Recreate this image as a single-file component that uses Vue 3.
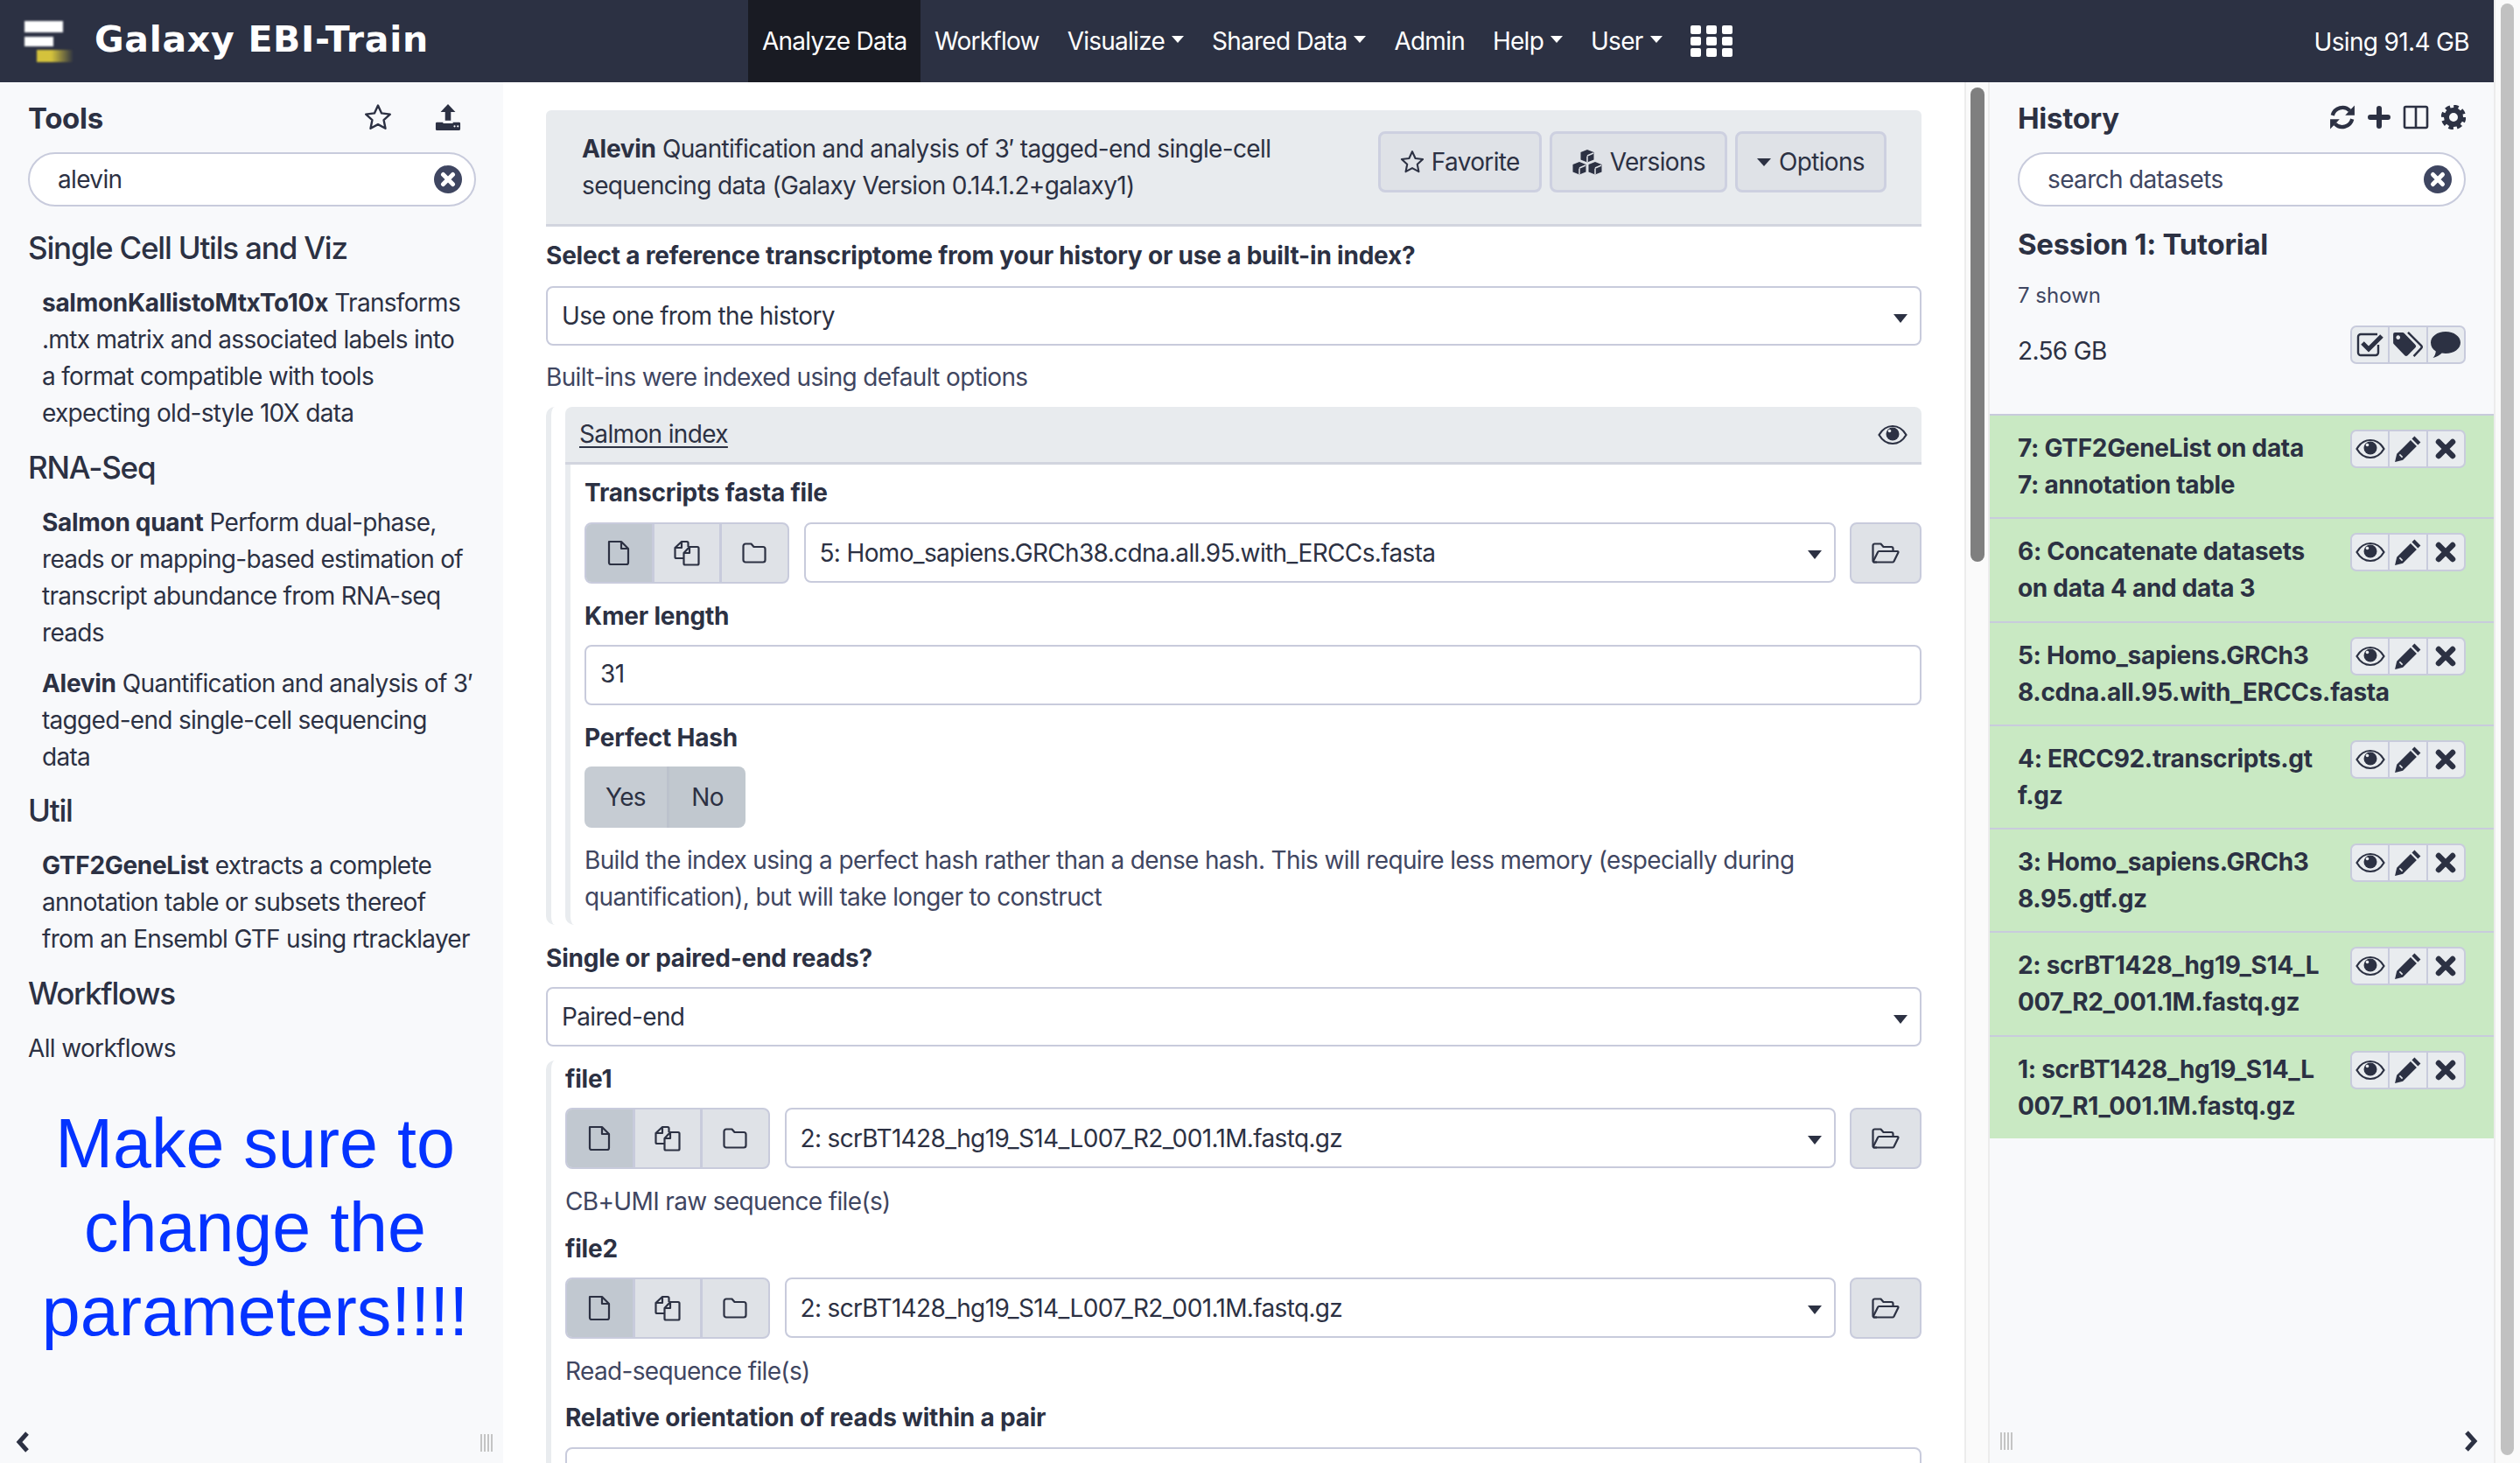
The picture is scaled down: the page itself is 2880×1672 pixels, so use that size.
<template>
  <div class="page">
    <svg class="defs" width="0" height="0">
      <defs>
        <symbol id="i-file" viewBox="0 0 26 30"><path d="M2 2h14l8 8v16a2 2 0 0 1-2 2H4a2 2 0 0 1-2-2zM16 2v8h8" fill="none" stroke="currentColor" stroke-width="2.2" stroke-linejoin="round"/></symbol>
        <symbol id="i-copy" viewBox="0 0 30 30"><path d="M11 21H3a1.500 1.500 0 0 1-1.500-1.500V9L9 2h6a1.500 1.500 0 0 1 1.500 1.500V8M9 2v7H1.500" fill="none" stroke="currentColor" stroke-width="2.200" stroke-linejoin="round"/><path d="M18 8h9a1.500 1.500 0 0 1 1.500 1.500V27a1.500 1.500 0 0 1-1.500 1.500H13a1.500 1.500 0 0 1-1.500-1.500V15zM18 8v7h-6.500" fill="none" stroke="currentColor" stroke-width="2.200" stroke-linejoin="round"/></symbol>
        <symbol id="i-folder" viewBox="0 0 28 24"><path d="M1.500 4A2.500 2.500 0 0 1 4 1.500h6.500l3 3.500H24A2.500 2.500 0 0 1 26.500 7.500V20a2.500 2.500 0 0 1-2.500 2.500H4A2.500 2.500 0 0 1 1.500 20z" fill="none" stroke="currentColor" stroke-width="2.200" stroke-linejoin="round"/></symbol>
        <symbol id="i-folder-open" viewBox="0 0 32 24"><path d="M6 22.500H3.500a2 2 0 0 1-2-2v-17a2 2 0 0 1 2-2h7l3 3.500h9a2 2 0 0 1 2 2V10" fill="none" stroke="currentColor" stroke-width="2.200" stroke-linejoin="round"/><path d="M8.500 10H29.500a1 1 0 0 1 .9 1.500L25.500 21.500a2 2 0 0 1-1.800 1H3a1 1 0 0 1-.9-1.500l5-10A1.500 1.500 0 0 1 8.500 10z" fill="none" stroke="currentColor" stroke-width="2.200" stroke-linejoin="round"/></symbol>
        <symbol id="i-star" viewBox="0 0 32 32"><path d="M16 2.500l4.100 8.900 9.700 1.200-7.200 6.600 1.900 9.600L16 24.100l-8.500 4.700 1.900-9.600-7.200-6.600 9.700-1.200z" fill="none" stroke="currentColor" stroke-width="2.400" stroke-linejoin="round"/></symbol>
        <symbol id="i-upload" viewBox="0 0 32 32"><path d="M16 0l9 9.500h-5.500V20h-7V9.500H7z" fill="currentColor"/><path d="M1 23.500A1.500 1.500 0 0 1 2.500 22H10v1.500h12V22h7.500a1.500 1.500 0 0 1 1.500 1.500V30a2 2 0 0 1-2 2H2a1.500 1.500 0 0 1-1-1.500z" fill="currentColor"/><circle cx="24" cy="27" r="1.200" fill="#f8f9fb"/><circle cx="28" cy="27" r="1.200" fill="#f8f9fb"/></symbol>
        <symbol id="i-clear" viewBox="0 0 32 32"><circle cx="16" cy="16" r="16" fill="#3f4661"/><path d="M10.500 10.500l11 11M21.500 10.500l-11 11" stroke="#fff" stroke-width="5" stroke-linecap="round"/></symbol>
        <symbol id="i-sync" viewBox="0 0 28 28"><path d="M3.500 12A11 11 0 0 1 22 7M24.500 16A11 11 0 0 1 6 21" fill="none" stroke="currentColor" stroke-width="4"/><path d="M27 1.500V12H17zM1 26.500V16h10z" fill="currentColor"/></symbol>
        <symbol id="i-plus" viewBox="0 0 26 26"><path d="M13 3v20M3 13h20" stroke="currentColor" stroke-width="6" stroke-linecap="round"/></symbol>
        <symbol id="i-columns" viewBox="0 0 30 28"><path d="M2 3.500A1.500 1.500 0 0 1 3.500 2h23A1.500 1.500 0 0 1 28 3.500v21a1.500 1.500 0 0 1-1.500 1.500h-23A1.500 1.500 0 0 1 2 24.500zM15 2v24" fill="none" stroke="currentColor" stroke-width="2.600"/></symbol>
        <symbol id="i-gear" viewBox="0 0 28 28"><circle cx="14" cy="14" r="8" fill="none" stroke="currentColor" stroke-width="6"/><circle cx="14" cy="14" r="12" fill="none" stroke="currentColor" stroke-width="4.500" stroke-dasharray="5.400 4"/></symbol>
        <symbol id="i-check" viewBox="0 0 32 32"><path d="M25 16v9a3 3 0 0 1-3 3H5a3 3 0 0 1-3-3V7a3 3 0 0 1 3-3h19" fill="none" stroke="currentColor" stroke-width="2.400"/><path d="M7 14l7 7L29 6" fill="none" stroke="currentColor" stroke-width="5"/></symbol>
        <symbol id="i-tags" viewBox="0 0 38 32"><path d="M1 3a2 2 0 0 1 2-2h9.500a3 3 0 0 1 2 1L28 16a2.500 2.500 0 0 1 0 3.500L18.500 29a2.500 2.500 0 0 1-3.500 0L2 15.500a3 3 0 0 1-1-2zM7 4.500a2.500 2.500 0 1 0 .01 0z" fill="currentColor" fill-rule="evenodd"/><path d="M19 1l16 16a2.500 2.500 0 0 1 0 3.500L26 30" fill="none" stroke="currentColor" stroke-width="2.600"/></symbol>
        <symbol id="i-comment" viewBox="0 0 36 32"><path d="M18 1c9.500 0 17 5.500 17 12.500S27.500 26 18 26c-1.500 0-3-.1-4.300-.4C11 28 8 30 3.500 31c1.800-2 3-4 3.300-7.500C3 21.200 1 17.500 1 13.500 1 6.500 8.500 1 18 1z" fill="currentColor"/></symbol>
        <symbol id="i-eye" viewBox="0 0 34 24"><path d="M1.500 12C5 6 10.500 2 17 2s12 4 15.500 10C29 18 23.500 22 17 22S5 18 1.500 12z" fill="none" stroke="currentColor" stroke-width="2.200"/><circle cx="17" cy="11" r="7.500" fill="currentColor"/><circle cx="13.500" cy="7.500" r="1.800" fill="#e9ecef"/></symbol>
        <symbol id="i-pencil" viewBox="0 0 30 30"><path d="M22 1.500l6.500 6.500-2.800 2.800-6.500-6.500zM17.800 5.700l6.500 6.500L9.500 27 1 29l2-8.500z" fill="currentColor"/><path d="M6 21l3 3" stroke="#e9ecef" stroke-width="1.500"/></symbol>
        <symbol id="i-times" viewBox="0 0 24 24"><path d="M4 4l16 16M20 4L4 20" stroke="currentColor" stroke-width="6.500" stroke-linecap="round"/></symbol>
        <symbol id="i-cubes" viewBox="0 0 36 30"><path d="M18 1l7.500 3v8.500L18 15.500l-7.500-3V4zM9 15l7.500 3v8.500L9 29.500l-7.500-3V18zM27 15l7.500 3v8.500L27 29.500l-7.500-3V18z" fill="currentColor"/><path d="M18 8.500v7M18 8l7-3M9 22.500v7M27 22.500v7M27 22l7-3M9 22l7-3" stroke="#dfe2e7" stroke-width="1.500" fill="none"/></symbol>
      </defs>
    </svg>

    <div class="main">
      <header class="navbar">
        <div class="brand">
          <div class="logo">
            <span class="bar-a"></span>
            <span class="bar-b"></span>
            <span class="bar-c"></span>
          </div>
          <span class="brand-name">Galaxy EBI-Train</span>
        </div>
        <nav class="nav">
          <a v-for="n in navItems" :key="n.label" class="nav-item" :class="{ active: n.active, caret: n.caret }">{{ n.label }}</a>
          <div class="apps">
            <span v-for="i in 9" :key="i"></span>
          </div>
        </nav>
        <div class="quota">Using 91.4 GB</div>
      </header>

      <div class="workspace">
        <aside class="tools">
          <div class="panel-head">
            <span class="panel-title">Tools</span>
            <div class="tools-icons">
              <svg class="i-star"><use href="#i-star" /></svg>
              <svg class="i-upload"><use href="#i-upload" /></svg>
            </div>
          </div>
          <div class="search">
            <span>alevin</span>
            <svg class="i-clear"><use href="#i-clear" /></svg>
          </div>
          <template v-for="sec in toolSections" :key="sec.name">
            <h3 class="tool-sec">{{ sec.name }}</h3>
            <p v-for="t in sec.tools" :key="t.name" class="tool"><b>{{ t.name }}</b> {{ t.desc }}</p>
          </template>
          <h3 class="tool-sec">Workflows</h3>
          <p class="all-wf">All workflows</p>
          <p class="warning">Make sure to change the parameters!!!!</p>
          <svg class="chev chev-left" viewBox="0 0 16 26"><path d="M13 3L4 13l9 10" fill="none" stroke="currentColor" stroke-width="5" /></svg>
          <div class="grip grip-tools"></div>
        </aside>

        <main class="center">
          <div class="tool-header">
            <div class="tool-title"><b>Alevin</b> Quantification and analysis of 3′ tagged-end single-cell sequencing data (Galaxy Version 0.14.1.2+galaxy1)</div>
            <div class="tool-btns">
              <button class="btn"><svg class="i-btn-star"><use href="#i-star" /></svg>Favorite</button>
              <button class="btn"><svg class="i-cubes"><use href="#i-cubes" /></svg>Versions</button>
              <button class="btn btn-caret">Options</button>
            </div>
          </div>

          <label class="label first">Select a reference transcriptome from your history or use a built-in index?</label>
          <div class="select">Use one from the history</div>
          <div class="help">Built-ins were indexed using default options</div>

          <section class="stripe sec-index">
            <div class="portlet">
              <div class="portlet-head">
                <span>Salmon index</span>
                <svg class="i-eye"><use href="#i-eye" /></svg>
              </div>
              <div class="portlet-body">
                <label class="label">Transcripts fasta file</label>
                <div class="file-row">
                  <div class="src-group">
                    <span class="src on"><svg class="i-file"><use href="#i-file" /></svg></span>
                    <span class="src"><svg class="i-copy"><use href="#i-copy" /></svg></span>
                    <span class="src"><svg class="i-folder"><use href="#i-folder" /></svg></span>
                  </div>
                  <div class="select grow">5: Homo_sapiens.GRCh38.cdna.all.95.with_ERCCs.fasta</div>
                  <span class="browse"><svg class="i-open"><use href="#i-folder-open" /></svg></span>
                </div>
                <label class="label gap">Kmer length</label>
                <div class="input">31</div>
                <label class="label gap">Perfect Hash</label>
                <div class="toggle"><span class="yes">Yes</span><span class="no">No</span></div>
                <div class="help para">Build the index using a perfect hash rather than a dense hash. This will require less memory (especially during quantification), but will take longer to construct</div>
              </div>
            </div>
          </section>

          <label class="label paired">Single or paired-end reads?</label>
          <div class="select">Paired-end</div>

          <section class="stripe sec-reads">
            <template v-for="f in fileInputs" :key="f.label">
              <label class="label" :class="f.label === 'file2' ? 'next' : 'top'">{{ f.label }}</label>
              <div class="file-row">
                <div class="src-group">
                  <span class="src on"><svg class="i-file"><use href="#i-file" /></svg></span>
                  <span class="src"><svg class="i-copy"><use href="#i-copy" /></svg></span>
                  <span class="src"><svg class="i-folder"><use href="#i-folder" /></svg></span>
                </div>
                <div class="select grow">2: scrBT1428_hg19_S14_L007_R2_001.1M.fastq.gz</div>
                <span class="browse"><svg class="i-open"><use href="#i-folder-open" /></svg></span>
              </div>
              <div class="help after-row">{{ f.help }}</div>
            </template>
            <label class="label last">Relative orientation of reads within a pair</label>
            <div class="input"></div>
          </section>
        </main>

        <div class="center-scroll"><div class="center-thumb"></div></div>

        <aside class="history">
          <div class="panel-head">
            <span class="panel-title">History</span>
            <div class="hist-icons">
              <svg class="i-sync"><use href="#i-sync" /></svg>
              <svg class="i-plus"><use href="#i-plus" /></svg>
              <svg class="i-columns"><use href="#i-columns" /></svg>
              <svg class="i-gear"><use href="#i-gear" /></svg>
            </div>
          </div>
          <div class="search muted">
            <span>search datasets</span>
            <svg class="i-clear"><use href="#i-clear" /></svg>
          </div>
          <div class="hist-name">Session 1: Tutorial</div>
          <div class="hist-shown">7 shown</div>
          <div class="hist-size">
            <span>2.56 GB</span>
            <div class="icon-group">
              <span><svg class="i-check"><use href="#i-check" /></svg></span>
              <span><svg class="i-tags"><use href="#i-tags" /></svg></span>
              <span><svg class="i-comment"><use href="#i-comment" /></svg></span>
            </div>
          </div>
          <div class="datasets">
            <div v-for="d in datasets" :key="d[0]" class="dataset">
              <div class="icon-group">
                <span><svg class="i-eye-s"><use href="#i-eye" /></svg></span>
                <span><svg class="i-pencil"><use href="#i-pencil" /></svg></span>
                <span><svg class="i-times"><use href="#i-times" /></svg></span>
              </div>
              <div class="ds-name">{{ d[0] }}</div>
              <div class="ds-name">{{ d[1] }}</div>
            </div>
          </div>
          <div class="grip grip-hist"></div>
          <svg class="chev chev-right" viewBox="0 0 16 26"><path d="M3 3l9 10-9 10" fill="none" stroke="currentColor" stroke-width="5" /></svg>
        </aside>
      </div>
    </div>

    <div class="page-scroll"><div class="page-thumb"></div></div>
  </div>
</template>

<script setup>
const navItems = [
  { label: 'Analyze Data', active: true },
  { label: 'Workflow' },
  { label: 'Visualize', caret: true },
  { label: 'Shared Data', caret: true },
  { label: 'Admin' },
  { label: 'Help', caret: true },
  { label: 'User', caret: true }
]

const toolSections = [
  {
    name: 'Single Cell Utils and Viz',
    tools: [
      { name: 'salmonKallistoMtxTo10x', desc: 'Transforms .mtx matrix and associated labels into a format compatible with tools expecting old-style 10X data' }
    ]
  },
  {
    name: 'RNA-Seq',
    tools: [
      { name: 'Salmon quant', desc: 'Perform dual-phase, reads or mapping-based estimation of transcript abundance from RNA-seq reads' },
      { name: 'Alevin', desc: 'Quantification and analysis of 3′ tagged-end single-cell sequencing data' }
    ]
  },
  {
    name: 'Util',
    tools: [
      { name: 'GTF2GeneList', desc: 'extracts a complete annotation table or subsets thereof from an Ensembl GTF using rtracklayer' }
    ]
  }
]

const fileInputs = [
  { label: 'file1', help: 'CB+UMI raw sequence file(s)' },
  { label: 'file2', help: 'Read-sequence file(s)' }
]

const datasets = [
  ['7: GTF2GeneList on data', '7: annotation table'],
  ['6: Concatenate datasets', 'on data 4 and data 3'],
  ['5: Homo_sapiens.GRCh3', '8.cdna.all.95.with_ERCCs.fasta'],
  ['4: ERCC92.transcripts.gt', 'f.gz'],
  ['3: Homo_sapiens.GRCh3', '8.95.gtf.gz'],
  ['2: scrBT1428_hg19_S14_L', '007_R2_001.1M.fastq.gz'],
  ['1: scrBT1428_hg19_S14_L', '007_R1_001.1M.fastq.gz']
]
</script>

<style>
html, body { margin: 0; background: #fff; overflow: hidden; }
</style>

<style scoped>
.page { display: flex; width: 2880px; height: 1672px; overflow: hidden; font-family: Inter, "Liberation Sans", sans-serif; font-size: 28px; line-height: 42px; letter-spacing: -0.65px; color: #2c3143; background: #fff; }
.defs { position: absolute; }
.main { width: 2850px; display: flex; flex-direction: column; }

.navbar { height: 94px; flex: none; background: #2c3143; color: #fff; display: flex; align-items: stretch; position: relative; }
.brand { width: 855px; display: flex; align-items: center; flex: none; }
.logo { width: 108px; height: 94px; flex: none; display: flex; flex-direction: column; padding: 24px 0 0 28px; box-sizing: border-box; filter: blur(0.8px); }
.bar-a { width: 44px; height: 13px; background: #fff; }
.bar-b { width: 33px; height: 11px; background: #fff; margin-top: 5px; }
.bar-c { width: 42px; height: 14px; margin: 4px 0 0 14px; background: linear-gradient(90deg, #d4c23c 40%, rgba(212, 194, 60, 0) 100%); }
.brand-name { font-family: "DejaVu Sans", sans-serif; font-weight: 700; font-size: 41px; letter-spacing: 0.7px; position: relative; top: -2px; }
.nav { display: flex; align-items: stretch; }
.nav-item { padding: 0 16px; display: flex; align-items: center; white-space: nowrap; letter-spacing: -0.75px; }
.nav-item.active { background: #191b23; width: 197px; box-sizing: border-box; }
.nav-item.caret::after { content: ""; margin: 0 0 4px 8px; border-top: 8px solid #fff; border-left: 7px solid transparent; border-right: 7px solid transparent; }
.apps { display: grid; grid-template-columns: repeat(3, 12px); grid-auto-rows: 10px; gap: 3px 6px; align-content: center; margin-left: 16px; }
.apps span { background: #fff; border-radius: 2px; }
.quota { position: absolute; right: 28px; top: 27px; }

.workspace { flex: 1; display: flex; min-height: 0; }

.tools { width: 575px; flex: none; box-sizing: border-box; background: #f8f9fb; padding: 0 32px; position: relative; }
.panel-head { height: 80px; display: flex; align-items: center; justify-content: space-between; }
.panel-title { font-size: 33px; font-weight: 700; letter-spacing: -0.3px; position: relative; top: 1px; }
.tools-icons { display: flex; gap: 48px; margin-right: 15px; align-items: center; }
.tools-icons svg { color: #2c3143; }
.i-star { width: 32px; height: 32px; }
.i-upload { width: 32px; height: 30px; }
.search { height: 62px; box-sizing: border-box; width: 512px; border: 2px solid #c8cbdc; border-radius: 31px; background: #fff; display: flex; align-items: center; justify-content: space-between; padding: 0 14px 0 32px; }
.search.muted { color: #3f4661; }
.i-clear { width: 32px; height: 32px; flex: none; }
.tool-sec { font-size: 35px; line-height: 43px; font-weight: 500; letter-spacing: -1.2px; margin: 19.5px 0 20px; }
.search + .tool-sec { margin-top: 26px; }
.tool { margin: 0 2px 16px 16px; letter-spacing: -0.7px; }
.tool:last-of-type { margin-bottom: 0; }
.tool b { font-weight: 700; letter-spacing: -0.3px; }
.all-wf { margin: 0; }
.warning { margin: 40px 0 0; padding-left: 8px; font-family: "Liberation Sans", sans-serif; font-size: 79px; line-height: 96px; letter-spacing: 0; color: #0433ff; text-align: center; }
.chev { position: absolute; width: 16px; height: 26px; color: #2c3143; }
.chev-left { left: 18px; bottom: 11px; }
.chev-right { left: 542px; bottom: 12px; }
.grip { position: absolute; width: 16px; height: 20px; background: repeating-linear-gradient(90deg, #c4c4c4 0 2px, transparent 2px 4px); }
.grip-tools { left: 549px; bottom: 13px; }
.grip-hist { left: 12px; bottom: 15px; }

.center { width: 1670px; flex: none; box-sizing: border-box; padding: 32px 49px 0; overflow: hidden; }
.tool-header { height: 133px; box-sizing: border-box; background: #e8ebee; border-bottom: 3px solid #d2d5df; display: flex; justify-content: space-between; align-items: flex-start; padding: 23px 40px 0 41px; border-radius: 6px 6px 0 0; }
.tool-title { width: 830px; }
.tool-title b { font-weight: 700; letter-spacing: -0.3px; }
.tool-btns { display: flex; gap: 9px; margin-top: 1px; }
.btn { height: 70px; padding: 0 22px; box-sizing: border-box; background: #dfe2e7; border: 3px solid #cdd0e0; border-radius: 8px; font: inherit; letter-spacing: inherit; color: inherit; display: flex; align-items: center; }
.i-btn-star { width: 28px; height: 28px; margin-right: 8px; }
.i-cubes { width: 36px; height: 30px; margin-right: 8px; }
.btn-caret::before { content: ""; margin-right: 9px; border-top: 9px solid #2c3143; border-left: 8px solid transparent; border-right: 8px solid transparent; }

.label { display: block; font-weight: 700; letter-spacing: -0.2px; margin-bottom: 14px; }
.label.first { margin-top: 12px; }
.portlet-body > .label { margin-bottom: 13px; }
.portlet-body > .label.gap { margin-top: 16px; margin-bottom: 12px; }
.label.paired { margin: 17px 0 12px; }
.label.top { margin-top: -1px; margin-bottom: 12px; }
.label.next { margin-top: 12px; margin-bottom: 12px; }
.label.last { margin-top: 11px; margin-bottom: 13px; }
.select, .input { height: 68px; box-sizing: border-box; border: 2px solid #c8cbdc; border-radius: 8px; padding: 0 16px; display: flex; align-items: center; background: #fff; position: relative; }
.input { height: 69px; padding-bottom: 3px; }
.select::after { content: ""; position: absolute; right: 14px; top: 30px; border-top: 10px solid #2c3143; border-left: 8px solid transparent; border-right: 8px solid transparent; }
.grow { flex: 1; }
.help { margin-top: 15px; color: #3f4661; }
.help.para { margin-top: 16px; }
.help.after-row { margin-top: 16px; }

.stripe { border-left: 6px solid #e9ecef; border-radius: 10px 0 0 10px; padding-left: 16px; }
.sec-index { margin-top: 13px; height: 592px; box-sizing: border-box; }
.sec-reads { margin-top: 17px; }
.portlet-head { height: 66px; box-sizing: border-box; background: #e8ebee; border-bottom: 3px solid #d2d5df; border-radius: 8px 8px 0 0; display: flex; align-items: center; justify-content: space-between; padding: 0 16px; }
.portlet-head span { text-decoration: underline; text-underline-offset: 4px; position: relative; top: -1px; }
.i-eye { width: 34px; height: 24px; }
.portlet-body { border-left: 6px solid #e9ecef; border-radius: 0 0 0 10px; padding: 11px 0 11px 16px; }

.file-row { display: flex; align-items: flex-start; gap: 16px; }
.file-row .select { height: 69px; }
.src-group { display: flex; height: 70px; box-sizing: border-box; border: 2px solid #c8cbdc; border-radius: 8px; overflow: hidden; background: #dfe2e7; flex: none; margin-right: 1px; }
.src { width: 74.5px; display: flex; align-items: center; justify-content: center; border-left: 3px solid #c8cbdc; }
.src:first-child { border-left: 0; }
.src.on { background: #c1c8d0; }
.i-file { width: 26px; height: 30px; }
.i-copy { width: 30px; height: 30px; }
.i-folder { width: 28px; height: 24px; }
.browse { width: 82px; height: 70px; box-sizing: border-box; flex: none; background: #dfe2e7; border: 2px solid #c8cbdc; border-radius: 8px; display: flex; align-items: center; justify-content: center; }
.i-open { width: 32px; height: 24px; }
.toggle { display: flex; width: 184px; height: 70px; border-radius: 8px; overflow: hidden; }
.toggle span { display: flex; align-items: center; justify-content: center; }
.toggle .yes { width: 97px; background: #c6ccd3; border-right: 3px solid #bcc2cc; box-sizing: border-box; }
.toggle .no { flex: 1; background: #c1c8cf; }

.center-scroll { width: 29px; flex: none; box-sizing: border-box; background: #fafafa; border-left: 2px solid #ececec; border-right: 2px solid #ececec; padding: 6px 5px 0; }
.center-thumb { width: 16px; height: 542px; border-radius: 8px; background: #7f7f7f; }

.history { width: 576px; flex: none; box-sizing: border-box; background: #f8f9fb; position: relative; }
.history > .panel-head, .history > .search, .history > .hist-name, .history > .hist-shown, .history > .hist-size { margin-left: 32px; margin-right: 32px; }
.history > .search { width: 512px; }
.hist-icons { display: flex; align-items: center; gap: 14px; }
.i-sync { width: 30px; height: 30px; }
.i-plus { width: 26px; height: 26px; }
.i-columns { width: 30px; height: 28px; }
.i-gear { width: 28px; height: 28px; }
.hist-name { font-size: 33px; font-weight: 700; letter-spacing: -0.3px; margin-top: 22px; line-height: 42px; }
.hist-shown { font-size: 24px; line-height: 36px; letter-spacing: 0; margin-top: 20px; color: #3f4661; }
.hist-size { display: flex; justify-content: space-between; align-items: flex-start; margin-top: 16px; }
.hist-size > span { margin-top: 18px; line-height: 22px; }
.icon-group { display: flex; width: 132px; height: 44px; box-sizing: border-box; border: 2px solid #c8cbdc; border-radius: 7px; background: #e9ecef; overflow: hidden; }
.icon-group span { flex: 1; display: flex; align-items: center; justify-content: center; border-left: 2px solid #c8cbdc; }
.icon-group span:first-child { border-left: 0; }
.i-check { width: 32px; height: 32px; }
.i-tags { width: 36px; height: 30px; }
.i-comment { width: 36px; height: 32px; }
.i-eye-s { width: 34px; height: 24px; }
.i-pencil { width: 32px; height: 32px; }
.i-times { width: 24px; height: 24px; }
.datasets { margin-top: 57px; }
.dataset { height: 118.3px; box-sizing: border-box; background: #c9e9c3; border-top: 2px solid #c8cbdc; padding: 16px 32px 0; font-weight: 700; letter-spacing: -0.3px; }
.dataset .icon-group { float: right; }
.ds-name { white-space: nowrap; }

.page-scroll { width: 30px; flex: none; box-sizing: border-box; background: #fafafa; border-left: 2px solid #ececec; padding: 4px 6px 0; }
.page-thumb { width: 15px; height: 1659px; border-radius: 8px; background: #c1c1c1; }
</style>
